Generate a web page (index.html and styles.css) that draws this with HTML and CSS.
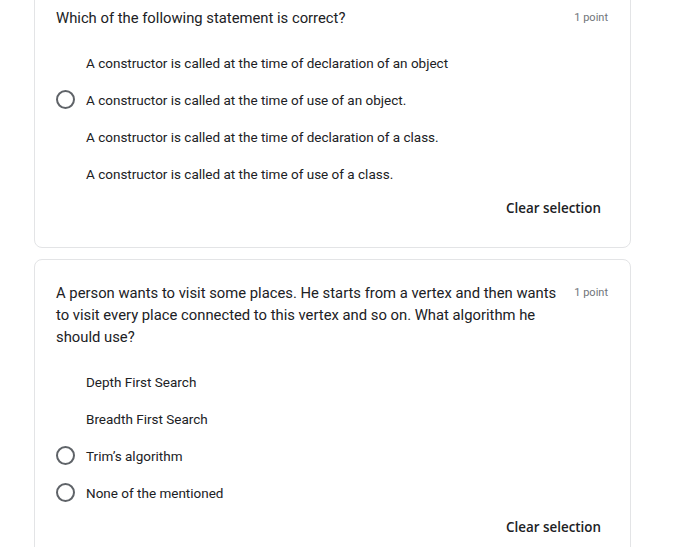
FILE: index.html
```html
<!DOCTYPE html>
<html>
<head>
<meta charset="utf-8">
<link rel="stylesheet" href="styles.css">
</head>
<body>
<div class="page">
  <div class="card">
    <div class="head">
      <div class="title">Which of the following statement is correct?</div>
      <div class="point">1 point</div>
    </div>
    <div class="options">
      <div class="opt"><span class="radio hidden"></span><span class="label">A constructor is called at the time of declaration of an object</span></div>
      <div class="opt"><span class="radio"></span><span class="label">A constructor is called at the time of use of an object.</span></div>
      <div class="opt"><span class="radio hidden"></span><span class="label">A constructor is called at the time of declaration of a class.</span></div>
      <div class="opt"><span class="radio hidden"></span><span class="label">A constructor is called at the time of use of a class.</span></div>
    </div>
    <div class="foot"><span class="clear">Clear selection</span></div>
  </div>
  <div class="card">
    <div class="head">
      <div class="title">A person wants to visit some places. He starts from a vertex and then wants to visit every place connected to this vertex and so on. What algorithm he should use?</div>
      <div class="point">1 point</div>
    </div>
    <div class="options">
      <div class="opt"><span class="radio hidden"></span><span class="label">Depth First Search</span></div>
      <div class="opt"><span class="radio hidden"></span><span class="label">Breadth First Search</span></div>
      <div class="opt"><span class="radio"></span><span class="label">Trim’s algorithm</span></div>
      <div class="opt"><span class="radio"></span><span class="label">None of the mentioned</span></div>
    </div>
    <div class="foot"><span class="clear">Clear selection</span></div>
  </div>
</div>
</body>
</html>
```

FILE: styles.css
```css
html, body {
  margin: 0;
  padding: 0;
  background: #ffffff;
}
body {
  font-family: Roboto, "Liberation Sans", Arial, sans-serif;
  color: #202124;
}
.page {
  margin-top: -16px;
  padding-left: 34px;
  width: 597px;
  display: flex;
  flex-direction: column;
  gap: 11px;
}
.card {
  border: 1px solid #e3e4e6;
  border-radius: 8px;
  padding: 22px 21px 29px 21px;
}
.head {
  display: flex;
  align-items: flex-start;
  gap: 16px;
}
.title {
  flex: 1;
  font-size: 14.8px;
  line-height: 22px;
  color: #202124;
}
.point {
  font-size: 11px;
  line-height: 22px;
  color: #70757a;
  white-space: nowrap;
  margin-right: 1px;
}
.options {
  margin-top: 15px;
  display: flex;
  flex-direction: column;
}
.opt {
  height: 37px;
  display: flex;
  align-items: center;
}
.radio {
  box-sizing: border-box;
  width: 19px;
  height: 19px;
  border: 2px solid #5f6368;
  border-radius: 50%;
  flex: none;
}
.radio.hidden {
  visibility: hidden;
}
.label {
  margin-left: 11px;
  font-size: 13.5px;
  color: #202124;
}
.foot {
  margin-top: 6px;
  display: flex;
  justify-content: flex-end;
}
.clear {
  font-family: "Open Sans", Roboto, sans-serif;
  font-size: 13.4px;
  line-height: 20px;
  font-weight: 600;
  color: #202124;
  padding-right: 8px;
}
```
